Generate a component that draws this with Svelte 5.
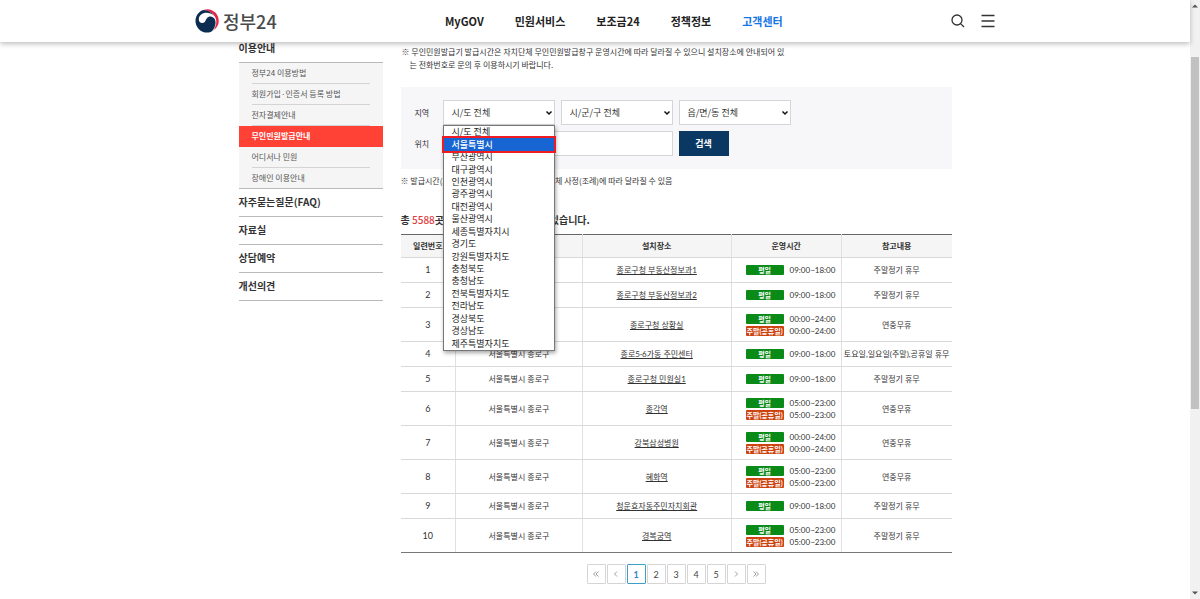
<!--
  @fileoverview Unmanned kiosk guide page of the customer center.

  Header, side menu, kiosk search form with an open region list,
  result table and pagination.
-->

<script lang="ts">
  type Row = { no: number; place: string; week: string; weekend?: string; note: string };

  const nav = ['MyGOV', '민원서비스', '보조금24', '정책정보', '고객센터'];

  const guideMenu = [
    '정부24 이용방법',
    '회원가입·인증서 등록 방법',
    '전자결제안내',
    '무인민원발급안내',
    '어디서나 민원',
    '장애인 이용안내'
  ];

  const sideMenu = ['자주묻는질문(FAQ)', '자료실', '상담예약', '개선의견'];

  const regions = [
    '시/도 전체',
    '서울특별시',
    '부산광역시',
    '대구광역시',
    '인천광역시',
    '광주광역시',
    '대전광역시',
    '울산광역시',
    '세종특별자치시',
    '경기도',
    '강원특별자치도',
    '충청북도',
    '충청남도',
    '전북특별자치도',
    '전라남도',
    '경상북도',
    '경상남도',
    '제주특별자치도'
  ];

  const selects = [
    { id: 'sido', label: '시/도', options: regions },
    { id: 'sigungu', label: '시/군/구', options: ['시/군/구 전체'] },
    { id: 'dong', label: '읍/면/동', options: ['읍/면/동 전체'] }
  ];

  const rows: Row[] = [
    { no: 1, place: '종로구청 부동산정보과1', week: '09:00~18:00', note: '주말정기 휴무' },
    { no: 2, place: '종로구청 부동산정보과2', week: '09:00~18:00', note: '주말정기 휴무' },
    { no: 3, place: '종로구청 상황실', week: '00:00~24:00', weekend: '00:00~24:00', note: '연중무휴' },
    { no: 4, place: '종로5·6가동 주민센터', week: '09:00~18:00', note: '토요일,일요일(주말),공휴일 휴무' },
    { no: 5, place: '종로구청 민원실1', week: '09:00~18:00', note: '주말정기 휴무' },
    { no: 6, place: '종각역', week: '05:00~23:00', weekend: '05:00~23:00', note: '연중무휴' },
    { no: 7, place: '강북삼성병원', week: '00:00~24:00', weekend: '00:00~24:00', note: '연중무휴' },
    { no: 8, place: '혜화역', week: '05:00~23:00', weekend: '05:00~23:00', note: '연중무휴' },
    { no: 9, place: '청운효자동주민자치회관', week: '09:00~18:00', note: '주말정기 휴무' },
    { no: 10, place: '경복궁역', week: '05:00~23:00', weekend: '05:00~23:00', note: '주말정기 휴무' }
  ];

  const pages = [1, 2, 3, 4, 5];

  let picked = $state('서울특별시');
  let current = $state(1);
</script>

{#snippet arrow(label: string, paths: string[])}
  <button class="page-btn" type="button" aria-label={label}>
    <svg viewBox="0 0 8 8" width="8" height="8" aria-hidden="true">
      {#each paths as d}<path {d} />{/each}
    </svg>
  </button>
{/snippet}

<div class="window">
  <div class="page">
    <!-- ── Header ── -->
    <header class="header">
      <div class="header-inner">
        <a class="logo" href="#home">
          <svg viewBox="0 0 24 24" width="24" height="24" aria-hidden="true">
            <path
              d="M8.500 1A11.500 11.500 0 0 1 17.500 22.100C21.500 17.500 22.500 11.500 19.800 7.400 17.200 3.500 13 1.800 8.500 1z"
              fill="#e4284b"
            />
            <path
              d="M8.500 1C3.800 2.300.5 6.600.5 12A11.500 11.500 0 0 0 12 23.500c2.200 0 3.800-.6 5.200-1.600 3.200-3.300 4.300-8.300 2.500-11.800-1.700-3-5.800-3.400-7.800-.9-1.500 2-1.600 4.500-4.400 4.700-2.300.1-3.800-1.500-3.700-3.700C4 6.200 7.300 3.700 11.500 3.700c3 0 5.400 1 7.300 2.700C16.600 3.200 12.500 1.200 8.500 1z"
              fill="#0b2d52"
            />
          </svg>
          <span>정부24</span>
        </a>
        <nav class="nav">
          {#each nav as item}
            <a href="#{item}" class:active={item === '고객센터'}>{item}</a>
          {/each}
        </nav>
        <div class="tools">
          <button type="button" aria-label="검색 열기">
            <svg viewBox="0 0 14 14" width="14" height="14" aria-hidden="true">
              <circle cx="6" cy="6" r="5" /><path d="M9.600 9.600 13 13" />
            </svg>
          </button>
          <button type="button" aria-label="전체메뉴">
            <svg viewBox="0 0 14 14" width="14" height="14" aria-hidden="true">
              <path d="M.5 1.500h13M.5 7h13M.5 12.500h13" />
            </svg>
          </button>
        </div>
      </div>
    </header>

    <div class="body">
      <!-- ── Side menu ── -->
      <aside class="side">
        <a class="side-title" href="#guide">이용안내</a>
        <ul class="sub">
          {#each guideMenu as item}
            <li class:active={item === '무인민원발급안내'}><a href="#{item}">{item}</a></li>
          {/each}
        </ul>
        {#each sideMenu as item}
          <a class="side-link" href="#{item}">{item}</a>
        {/each}
      </aside>

      <main class="main">
        <p class="notice">
          ※ 무인민원발급기 발급시간은 자치단체 무인민원발급창구 운영시간에 따라 달라질 수 있으니 설치장소에 안내되어 있<br
          />는 전화번호로 문의 후 이용하시기 바랍니다.
        </p>

        <!-- ── Search form ── -->
        <form class="search" onsubmit={(e) => e.preventDefault()}>
          <label for="sido">지역</label>
          {#each selects as s}
            <div class="select">
              <select id={s.id} aria-label={s.label}>
                {#each s.options as option}<option>{option}</option>{/each}
              </select>
              <svg viewBox="0 0 8 8" width="8" height="8" aria-hidden="true"><path d="M1.500 2.500 4 5l2.500-2.500" /></svg>
              {#if s.id === 'sido'}
                <ul class="options" role="listbox" aria-label="시/도 목록">
                  {#each regions as region}
                    <li role="option" aria-selected={picked === region}>
                      <button type="button" onclick={() => (picked = region)}>{region}</button>
                    </li>
                  {/each}
                </ul>
              {/if}
            </div>
          {/each}
          <label class="row-start" for="place">위치</label>
          <input id="place" type="text" />
          <button class="submit" type="submit">검색</button>
        </form>

        <p class="hint">※ 발급시간(24시간운영)은 설치장소 및 자치단체 사정(조례)에 따라 달라질 수 있음</p>
        <p class="total">총 <em>5588</em>곳의 무인민원발급창구들이 있습니다.</p>

        <!-- ── Results ── -->
        <table>
          <colgroup>
            <col class="c-no" /><col class="c-area" /><col class="c-place" /><col class="c-time" /><col class="c-note" />
          </colgroup>
          <thead>
            <tr>
              <th>일련번호</th>
              <th>시군구</th>
              <th>설치장소</th>
              <th>운영시간</th>
              <th>참고내용</th>
            </tr>
          </thead>
          <tbody>
            {#each rows as row}
              <tr class:double={row.weekend}>
                <td>{row.no}</td>
                <td>서울특별시 종로구</td>
                <td><a href="#place-{row.no}">{row.place}</a></td>
                <td class="time">
                  <div><b>평일</b>{row.week}</div>
                  {#if row.weekend}<div><b class="weekend">주말(공휴일)</b>{row.weekend}</div>{/if}
                </td>
                <td>{row.note}</td>
              </tr>
            {/each}
          </tbody>
        </table>

        <!-- ── Pagination ── -->
        <nav class="pages" aria-label="페이지">
          {@render arrow('처음', ['M4 1.500 1.500 4 4 6.500', 'M6.500 1.500 4 4l2.500 2.500'])}
          {@render arrow('이전', ['M5 1.500 2.500 4 5 6.500'])}
          {#each pages as page}
            <button class="page-btn" class:current={page === current} type="button" onclick={() => (current = page)}>
              {page}
            </button>
          {/each}
          {@render arrow('다음', ['M3 1.500 5.500 4 3 6.500'])}
          {@render arrow('마지막', ['M1.500 1.500 4 4 1.500 6.500', 'M4 1.500 6.500 4 4 6.500'])}
        </nav>
      </main>
    </div>
  </div>

  <!-- ── Window scrollbar ── -->
  <div class="scrollbar" aria-hidden="true">
    <svg viewBox="0 0 6 4" width="6" height="4"><path d="M0 3.500 3 .5l3 3z" /></svg>
    <div class="track"><div class="thumb"></div></div>
    <svg viewBox="0 0 6 4" width="6" height="4"><path d="M0 .5l3 3 3-3z" /></svg>
  </div>
</div>

<style>
  :global(body) {
    margin: 0;
    background: #fff;
    color: #333;
    font-family: 'Noto Sans CJK KR', sans-serif;
  }

  * {
    box-sizing: border-box;
  }

  a {
    color: inherit;
    text-decoration: none;
  }

  ul,
  p {
    margin: 0;
    padding: 0;
    list-style: none;
  }

  button,
  input,
  select {
    margin: 0;
    padding: 0;
    border: 0;
    border-radius: 0;
    background: none;
    color: inherit;
    font: inherit;
  }

  .window {
    display: flex;
    min-height: 100vh;
  }

  .page {
    flex: 1;
    min-width: 0;
  }

  /* ── Header ── */

  .header {
    position: relative;
    z-index: 5;
    background: #fff;
    box-shadow: 0 2px 5px rgba(0, 0, 0, 0.25);
  }

  .header-inner {
    display: flex;
    align-items: center;
    justify-content: space-between;
    max-width: 800px;
    height: 42px;
    margin: 0 auto;
  }

  .logo {
    display: flex;
    align-items: center;
    gap: 4px;
    color: #4a4a4c;
    font-size: 18px;
    font-weight: 500;
    line-height: 24px;
  }

  .nav {
    display: flex;
    gap: 31px;
    color: #222;
    font-size: 11px;
    font-weight: 700;
    line-height: 16px;
  }

  .nav .active {
    color: #1474e8;
  }

  .tools {
    display: flex;
    gap: 16px;
  }

  .tools button {
    display: flex;
  }

  .tools svg {
    fill: none;
    stroke: #333;
    stroke-width: 1.3;
  }

  /* ── Columns ── */

  .body {
    display: flex;
    gap: 18px;
    max-width: 713px;
    margin: 0 auto;
  }

  .side {
    flex: 0 0 144px;
    font-size: 8px;
  }

  .side-title,
  .side-link {
    display: block;
    border-bottom: 1px solid #b9b9b9;
    font-size: 10px;
    font-weight: 700;
  }

  .side-title {
    padding-bottom: 8px;
    line-height: 12px;
  }

  .side-link {
    padding-bottom: 2px;
    line-height: 25px;
  }

  .sub {
    border-bottom: 1px solid #b9b9b9;
    background: #f5f5f5;
    color: #555;
  }

  .sub li {
    padding: 0 13px;
  }

  .sub a {
    display: block;
    border-bottom: 1px solid #d4d4d4;
    line-height: 20px;
  }

  .sub li:last-child a {
    border-bottom: 0;
  }

  .sub .active {
    background: #ff4136;
    color: #fff;
    font-weight: 700;
  }

  .sub .active a {
    border-color: transparent;
  }

  .main {
    flex: 1;
    min-width: 0;
    padding-top: 3px;
  }

  .notice,
  .hint {
    font-size: 8px;
    line-height: 13px;
    white-space: nowrap;
  }

  .notice {
    padding-left: 9px;
    text-indent: -8px;
  }

  /* ── Search form ── */

  .search {
    display: grid;
    grid-template-columns: 22px repeat(3, 112px);
    gap: 6px;
    align-items: center;
    margin-top: 16px;
    padding: 13px 14px;
    background: #f7f7fa;
    font-size: 9px;
  }

  .search label {
    font-size: 8px;
  }

  .row-start {
    grid-column: 1;
  }

  .select {
    position: relative;
  }

  .select select,
  .search input {
    width: 100%;
    height: 25px;
    border: 1px solid #d5d5d9;
    background: #fff;
  }

  .select select {
    display: block;
    padding: 0 8px;
    appearance: none;
  }

  .select > svg {
    position: absolute;
    top: 9px;
    right: 2px;
    pointer-events: none;
    fill: none;
    stroke: #111;
    stroke-width: 1.5;
  }

  .search input {
    grid-column: 2 / span 2;
    padding: 0 8px;
  }

  .submit {
    justify-self: start;
    width: 50px;
    height: 25px;
    background: #0b3763;
    color: #fff;
    font-weight: 700;
  }

  .options {
    position: absolute;
    top: 100%;
    left: 0;
    z-index: 3;
    display: flex;
    flex-direction: column;
    width: 100%;
    height: 226px;
    border: 1px solid #777;
    background: #fff;
    box-shadow: 1px 2px 4px rgba(0, 0, 0, 0.35);
    color: #222;
  }

  .options li {
    display: flex;
    flex: 1;
    min-height: 0;
  }

  .options button {
    flex: 1;
    padding: 0 8px;
    line-height: 12px;
    text-align: left;
  }

  .options [aria-selected='true'] {
    position: relative;
    outline: 2px solid #f01c22;
    background: #1765d2;
    color: #fff;
    font-weight: 500;
  }

  .hint {
    margin-top: 5px;
  }

  .total {
    margin-top: 25px;
    font-size: 10px;
    font-weight: 700;
    line-height: 16px;
  }

  .total em {
    color: #e03a3e;
    font-style: normal;
    font-weight: 500;
  }

  /* ── Results ── */

  table {
    width: 100%;
    margin-top: 6px;
    border-collapse: collapse;
    border-top: 1px solid #666;
    border-bottom: 1px solid #777;
    table-layout: fixed;
    font-family: Lato, 'Noto Sans CJK KR', sans-serif;
    font-size: 8px;
    line-height: 12px;
    text-align: center;
  }

  .c-no {
    width: 10%;
  }

  .c-area {
    width: 23%;
  }

  .c-place {
    width: 27%;
  }

  .c-time,
  .c-note {
    width: 20%;
  }

  th,
  td {
    height: 25px;
    padding: 0;
    border-bottom: 1px solid #d9d9d9;
    white-space: nowrap;
  }

  th {
    height: 23px;
    background: #f5f5f5;
    font-weight: 700;
  }

  th + th,
  td + td {
    border-left: 1px solid #e0e0e0;
  }

  .double td {
    height: 34px;
  }

  tbody tr:last-child td {
    border-bottom-color: #777;
  }

  td:first-child {
    font-size: 9px;
  }

  td a {
    text-decoration: underline;
  }

  .time div {
    display: flex;
    align-items: center;
    gap: 6px;
    padding-left: 14px;
  }

  .time b {
    width: 38px;
    height: 10px;
    border-radius: 1px;
    background: #0a8a16;
    color: #fff;
    font-size: 7px;
    line-height: 10px;
  }

  .time .weekend {
    background: #cd4310;
  }

  /* ── Pagination ── */

  .pages {
    display: flex;
    justify-content: center;
    gap: 1px;
    margin-top: 11px;
  }

  .page-btn {
    display: flex;
    align-items: center;
    justify-content: center;
    width: 19px;
    height: 20px;
    border: 1px solid #d5d5d5;
    border-radius: 1px;
    color: #444;
    font-family: Lato, sans-serif;
    font-size: 9px;
  }

  .page-btn.current {
    border-color: #3f9fc6;
    color: #2f86c5;
    font-weight: 700;
  }

  .page-btn svg {
    fill: none;
    stroke: #888;
    stroke-width: 0.8;
  }

  /* ── Window scrollbar ── */

  .scrollbar {
    display: flex;
    flex: 0 0 10px;
    flex-direction: column;
    align-items: center;
    padding: 4px 0;
    background: #f1f1f1;
    fill: #555;
  }

  .track {
    display: flex;
    flex: 1;
    flex-direction: column;
    width: 8px;
  }

  .track::before {
    flex: 49;
    content: '';
  }

  .thumb {
    flex: 352;
    background: #c1c1c1;
  }

  .track::after {
    flex: 182;
    content: '';
  }
</style>
